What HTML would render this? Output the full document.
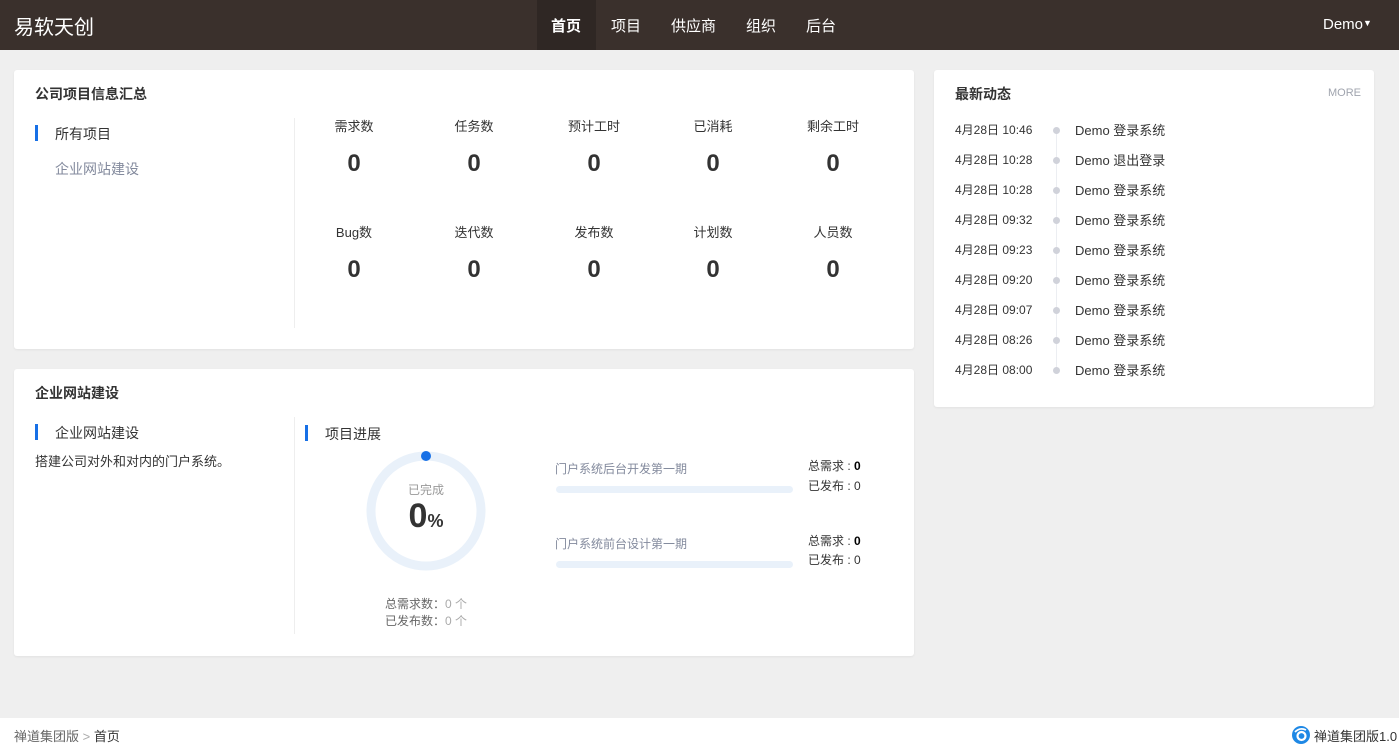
<!DOCTYPE html>
<html><head><meta charset="utf-8"><style>
*{margin:0;padding:0;box-sizing:border-box}
body{width:1399px;height:751px;background:#efefef;font-family:"Liberation Sans","Noto Sans CJK SC",sans-serif;color:#333;position:relative;overflow:hidden;font-size:13px}
.a{position:absolute;white-space:nowrap}
.nav{position:absolute;left:0;top:0;width:1399px;height:50px;background:#3a302c}
.card{position:absolute;background:#fff;border-radius:3px;box-shadow:0 1px 2px rgba(0,0,0,.06)}
.t{font-weight:bold;font-size:14px;color:#333}
.lab{width:80px;text-align:center;font-size:13px;color:#333}
.num{width:80px;text-align:center;font-size:24px;font-weight:bold;color:#333}
.bar{position:absolute;width:3px;height:16px;background:#1770e6}
.tm{font-size:12px;color:#333}
.dot{width:7px;height:7px;border-radius:50%;background:#d0d2da}
</style></head><body>
<div class="nav">
<div class="a" style="left:14px;top:11px;font-size:20px;color:#fff">易软天创</div>
<div class="a" style="left:537px;top:0;width:59px;height:50px;background:#2f2724"></div>
<div class="a" style="left:551px;top:15px;font-size:15px;color:#fff;font-weight:bold">首页</div>
<div class="a" style="left:611px;top:15px;font-size:15px;color:#fff">项目</div>
<div class="a" style="left:671px;top:15px;font-size:15px;color:#fff">供应商</div>
<div class="a" style="left:746px;top:15px;font-size:15px;color:#fff">组织</div>
<div class="a" style="left:806px;top:15px;font-size:15px;color:#fff">后台</div>
<div class="a" style="left:1323px;top:16px;font-size:15px;color:#fff">Demo<span style="font-size:9px;vertical-align:3px">▼</span></div>
</div>

<div class="card" style="left:14px;top:70px;width:900px;height:279px"></div>
<div class="a t" style="left:35px;top:84px">公司项目信息汇总</div>
<div class="bar" style="left:35px;top:125px"></div>
<div class="a" style="left:55px;top:124px;font-size:14px">所有项目</div>
<div class="a" style="left:55px;top:159px;font-size:14px;color:#838a9d">企业网站建设</div>
<div class="a" style="left:294px;top:118px;width:1px;height:210px;background:#eee"></div>
<div class="a lab" style="left:314px;top:116px">需求数</div><div class="a num" style="left:314px;top:150px">0</div>
<div class="a lab" style="left:434px;top:116px">任务数</div><div class="a num" style="left:434px;top:150px">0</div>
<div class="a lab" style="left:554px;top:116px">预计工时</div><div class="a num" style="left:554px;top:150px">0</div>
<div class="a lab" style="left:673px;top:116px">已消耗</div><div class="a num" style="left:673px;top:150px">0</div>
<div class="a lab" style="left:793px;top:116px">剩余工时</div><div class="a num" style="left:793px;top:150px">0</div>
<div class="a lab" style="left:314px;top:222px">Bug数</div><div class="a num" style="left:314px;top:256px">0</div>
<div class="a lab" style="left:434px;top:222px">迭代数</div><div class="a num" style="left:434px;top:256px">0</div>
<div class="a lab" style="left:554px;top:222px">发布数</div><div class="a num" style="left:554px;top:256px">0</div>
<div class="a lab" style="left:673px;top:222px">计划数</div><div class="a num" style="left:673px;top:256px">0</div>
<div class="a lab" style="left:793px;top:222px">人员数</div><div class="a num" style="left:793px;top:256px">0</div>

<div class="card" style="left:14px;top:369px;width:900px;height:287px"></div>
<div class="a t" style="left:35px;top:383px">企业网站建设</div>
<div class="bar" style="left:35px;top:424px"></div>
<div class="a" style="left:55px;top:423px;font-size:14px">企业网站建设</div>
<div class="a" style="left:35px;top:451px;font-size:13px">搭建公司对外和对内的门户系统。</div>
<div class="a" style="left:294px;top:417px;width:1px;height:217px;background:#eee"></div>
<div class="bar" style="left:305px;top:425px"></div>
<div class="a" style="left:325px;top:424px;font-size:14px">项目进展</div>
<svg class="a" style="left:362px;top:447px" width="128" height="128"><circle cx="64" cy="64" r="55" fill="none" stroke="#e9f1fa" stroke-width="9"/><circle cx="64" cy="9" r="5" fill="#1770e6"/></svg>
<div class="a" style="left:386px;top:481px;width:80px;text-align:center;font-size:12px;color:#999">已完成</div>
<div class="a" style="left:386px;top:497px;width:80px;text-align:center;font-size:34px;font-weight:bold;color:#333">0<span style="font-size:18px">%</span></div>
<div class="a" style="left:385px;top:595px;font-size:12px;color:#666">总需求数：<span style="color:#aaa">0 个</span></div>
<div class="a" style="left:385px;top:612px;font-size:12px;color:#666">已发布数：<span style="color:#aaa">0 个</span></div>
<div class="a" style="left:555px;top:460px;font-size:12px;color:#838a9d">门户系统后台开发第一期</div>
<div class="a" style="left:556px;top:486px;width:237px;height:7px;border-radius:4px;background:#e9f1fa"></div>
<div class="a" style="left:808px;top:457px;font-size:12px;color:#333">总需求 : <b style="color:#000">0</b></div>
<div class="a" style="left:808px;top:477px;font-size:12px;color:#333">已发布 : 0</div>
<div class="a" style="left:555px;top:535px;font-size:12px;color:#838a9d">门户系统前台设计第一期</div>
<div class="a" style="left:556px;top:561px;width:237px;height:7px;border-radius:4px;background:#e9f1fa"></div>
<div class="a" style="left:808px;top:532px;font-size:12px;color:#333">总需求 : <b style="color:#000">0</b></div>
<div class="a" style="left:808px;top:551px;font-size:12px;color:#333">已发布 : 0</div>

<div class="card" style="left:934px;top:70px;width:440px;height:337px"></div>
<div class="a t" style="left:955px;top:84px">最新动态</div>
<div class="a" style="left:1328px;top:87px;font-size:11px;color:#a0a4ae">MORE</div>
<div class="a" style="left:1056px;top:130px;width:1px;height:240px;background:#eceef2"></div>
<div id="tl"></div>
<script>
var d=["登录系统","退出登录","登录系统","登录系统","登录系统","登录系统","登录系统","登录系统","登录系统"],t=["10:46","10:28","10:28","09:32","09:23","09:20","09:07","08:26","08:00"],h="";
for(var i=0;i<9;i++){var y=121+30*i;h+='<div class="a tm" style="left:955px;top:'+y+'px">4月28日 '+t[i]+'</div><div class="a dot" style="left:1053px;top:'+(y+6)+'px"></div><div class="a" style="left:1075px;top:'+(y-1)+'px;font-size:13px">Demo '+d[i]+'</div>';}
document.getElementById("tl").outerHTML=h;
</script>

<div class="a" style="left:0;top:718px;width:1399px;height:33px;background:#fff"></div>
<div class="a" style="left:14px;top:726px;font-size:13px;color:#666">禅道集团版 <span style="color:#aaa">&gt;</span> <span style="color:#333">首页</span></div>
<svg class="a" style="left:1292px;top:726px" width="18" height="18"><circle cx="9" cy="9" r="9" fill="#1e88e5"/><circle cx="9.5" cy="10" r="4" fill="none" stroke="#fff" stroke-width="2.2"/><path d="M3 6 Q8 1 14 4" stroke="#fff" stroke-width="1.8" fill="none"/></svg>
<div class="a" style="left:1314px;top:726px;font-size:13px;color:#333">禅道集团版1.0</div>
</body></html>
